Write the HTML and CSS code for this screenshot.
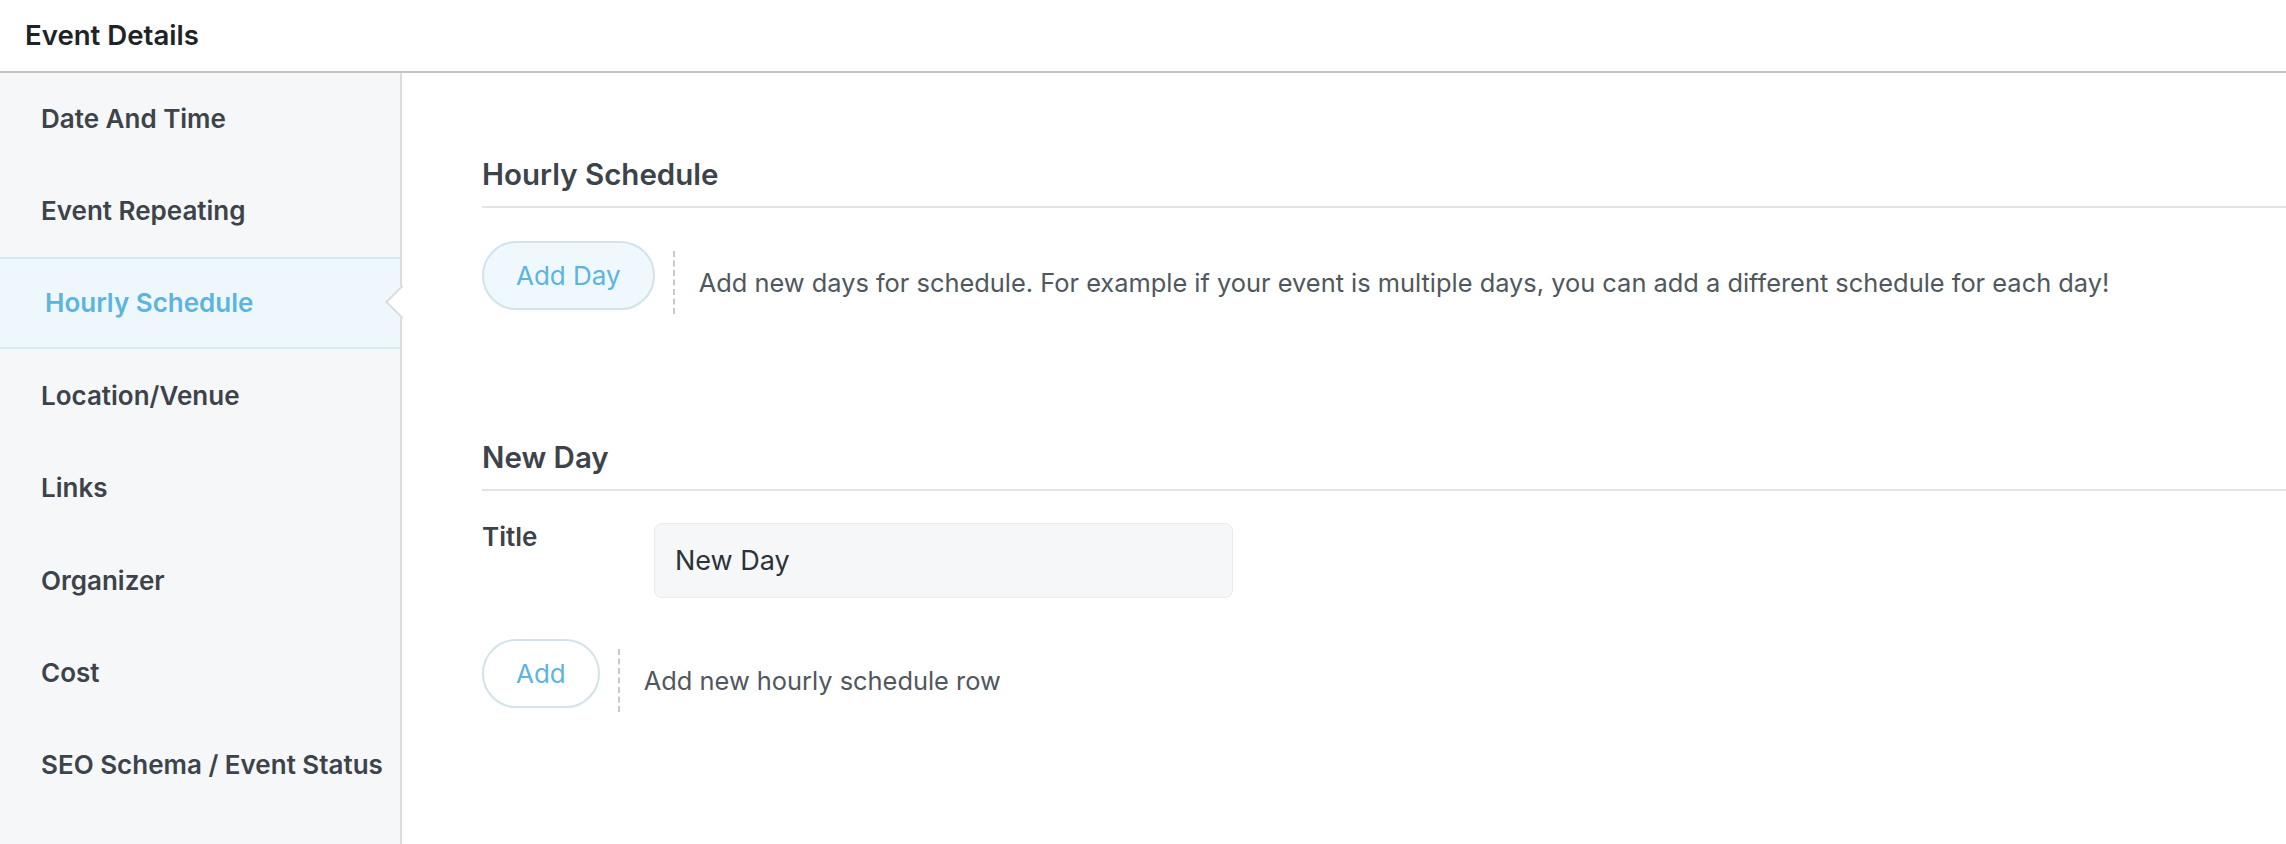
FILE: index.html
```html
<!DOCTYPE html>
<html lang="en">
<head>
<meta charset="utf-8">
<title>Event Details</title>
<link rel="stylesheet" href="styles.css">
</head>
<body>
<div class="panel">
  <header class="panel-header">Event Details</header>
  <div class="panel-body">
    <nav class="sidebar">
      <div class="nav-item">Date And Time</div>
      <div class="nav-item">Event Repeating</div>
      <div class="nav-item active">Hourly Schedule<span class="notch"></span></div>
      <div class="nav-item">Location/Venue</div>
      <div class="nav-item">Links</div>
      <div class="nav-item">Organizer</div>
      <div class="nav-item">Cost</div>
      <div class="nav-item">SEO Schema / Event Status</div>
    </nav>
    <main class="content">
      <section class="section first">
        <h2 class="section-title">Hourly Schedule</h2>
        <div class="action-row">
          <button class="pill-btn tinted">Add Day</button>
          <div class="hint">Add new days for schedule. For example if your event is multiple days, you can add a different schedule for each day!</div>
        </div>
      </section>
      <section class="section second">
        <h2 class="section-title">New Day</h2>
        <div class="field-row">
          <label class="field-label">Title</label>
          <div class="field-input">New Day</div>
        </div>
        <div class="action-row add-row">
          <button class="pill-btn plain">Add</button>
          <div class="hint">Add new hourly schedule row</div>
        </div>
      </section>
    </main>
  </div>
</div>
</body>
</html>
```

FILE: styles.css
```css
* { box-sizing: border-box; }
html, body { margin: 0; padding: 0; background: #fff; }
body {
  font-family: Inter, "Liberation Sans", sans-serif;
  color: #3c434a;
  height: 844px;
  overflow: hidden;
}
.panel { display: flex; flex-direction: column; height: 844px; }
.panel-header {
  height: 73px;
  padding-left: 25px;
  display: flex;
  align-items: center;
  font-size: 27.6px;
  font-weight: 600;
  color: #1d2327;
  border-bottom: 2px solid #c3c4c7;
  padding-bottom: 2px;
}
.panel-body { flex: 1; display: flex; }
.sidebar {
  width: 402px;
  flex: none;
  background: #f6f7f9;
  border-right: 2px solid #dcdcde;
}
.nav-item {
  position: relative;
  height: 92.4px;
  padding-left: 41px;
  display: flex;
  align-items: center;
  font-size: 26px;
  font-weight: 600;
  color: #3c434a;
}
.nav-item:first-child { padding-bottom: 2px; }
.nav-item:nth-child(2) { padding-bottom: 2px; }
.nav-item.active {
  background: #eef8fc;
  border-top: 2px solid #d4ebf4;
  border-bottom: 2px solid #d4ebf4;
  padding-left: 45px;
  color: #5bb5e0;
  margin-top: -1px;
}
.notch {
  position: absolute;
  right: -14px;
  top: 50%;
  width: 24px;
  height: 24px;
  margin-top: -13px;
  background: #fff;
  border-left: 2px solid #dcdcde;
  border-bottom: 2px solid #dcdcde;
  transform: rotate(45deg);
}
.content { flex: 1; padding-left: 80px; }
.section-title {
  margin: 0;
  font-size: 29.5px;
  font-weight: 600;
  line-height: 40px;
  color: #3c434a;
  padding-bottom: 12px;
  border-bottom: 2px solid #e2e4e7;
}
.section.first { margin-top: 81px; }
.section.second { margin-top: 123px; }
.action-row { display: flex; align-items: flex-start; margin-top: 33px; }
.pill-btn {
  font-family: inherit;
  font-size: 26px;
  font-weight: 400;
  height: 69px;
  padding: 0 32px;
  border-radius: 40px;
  border: 2px solid #d3e3ea;
  color: #5bb5e0;
  cursor: pointer;
  box-shadow: 0 1px 2px rgba(0,0,0,0.03);
}
.pill-btn.tinted { background: #eff8fc; }
.pill-btn.plain { background: #fff; }
.hint {
  margin-top: 10px;
  margin-left: 18px;
  height: 63px;
  padding-left: 24px;
  border-left: 2px dashed #c8c9cc;
  display: flex;
  align-items: center;
  font-size: 25.4px;
  color: #50575e;
  white-space: nowrap;
}
.field-row { display: flex; align-items: flex-start; margin-top: 31px; }
.field-label {
  width: 172px;
  flex: none;
  font-size: 26px;
  font-weight: 600;
  line-height: 30px;
  color: #3c434a;
}
.field-input {
  width: 579px;
  height: 75px;
  margin-top: 1px;
  padding-left: 20px;
  display: flex;
  align-items: center;
  background: #f6f7f9;
  border: 1px solid #e8eaed;
  border-radius: 8px;
  font-size: 27px;
  color: #2c3338;
}
.add-row { margin-top: 41px; }
```
